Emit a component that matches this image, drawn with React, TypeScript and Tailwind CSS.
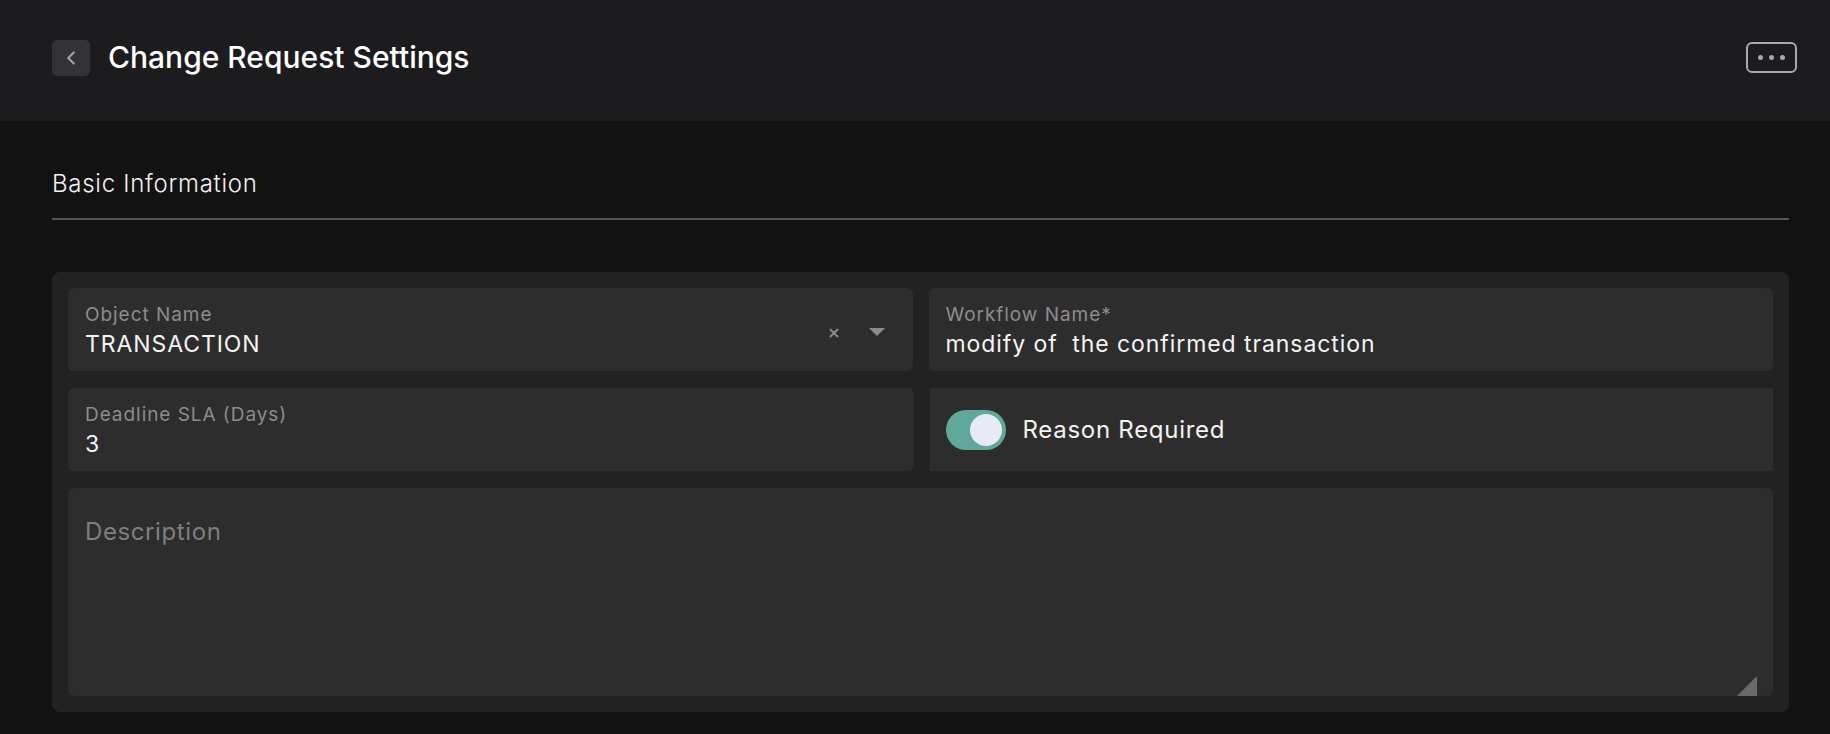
import { ChevronLeft, X } from "lucide-react";

const font = { fontFamily: "Inter, 'Noto Sans', sans-serif" };

function Field({ label, value }: { label: string; value: string }) {
    return <div className="flex-1 h-[83px] rounded-md bg-[#2d2d2d] px-[17px] pt-[15px]">
        <div className="text-[19px] leading-[24px] tracking-[0.05em] text-[#8c8c8c]">{label}</div>
        <div className="mt-[2px] text-[23px] leading-[30px] tracking-[0.04em] text-[#f4f4f4] whitespace-pre">{value}</div>
    </div>;
}

export default function App() {
    return <div style={font} className="h-screen w-full bg-[#121212] text-white overflow-hidden">
        {/* header */}
        <div className="h-[121px] bg-[#1c1c1e] flex items-center justify-between pl-[52px] pr-[33px] pb-[6px]">
            <div className="flex items-center gap-[18px]">
                <button className="w-[38px] h-[36px] rounded-[5px] bg-[#333336] flex items-center justify-center">
                    <ChevronLeft size={22} strokeWidth={2.5} className="text-[#a0a0a6]" />
                </button>
                <div className="text-[30px] font-medium">Change Request Settings</div>
            </div>
            <button className="w-[51px] h-[31px] rounded-[6px] border-2 border-[#a8a8ad] flex items-center justify-center gap-[6px]">
                <span className="w-[5px] h-[5px] rounded-full bg-[#a8a8ad]"></span>
                <span className="w-[5px] h-[5px] rounded-full bg-[#a8a8ad]"></span>
                <span className="w-[5px] h-[5px] rounded-full bg-[#a8a8ad]"></span>
            </button>
        </div>

        <div className="pl-[52px] pr-[41px]">
            <div className="pt-[48px] pb-[19px] border-b-2 border-[#565656] text-[24px] leading-[30px] font-light tracking-[0.03em] text-[#f2f2f2]">
                Basic Information
            </div>

            <div className="mt-[52px] rounded-lg bg-[#222222] p-[16px] flex flex-col gap-[17px]">
                <div className="flex gap-[16px]">
                    <div className="flex-1 h-[83px] rounded-md bg-[#2d2d2d] px-[17px] pt-[15px] flex items-center">
                        <div className="flex-1 self-start">
                            <div className="text-[19px] leading-[24px] tracking-[0.05em] text-[#8c8c8c]">Object Name</div>
                            <div className="mt-[2px] text-[23px] leading-[30px] tracking-[0.04em] text-[#f4f4f4]">TRANSACTION</div>
                        </div>
                        <div className="flex items-center gap-[28px] pr-[11px] -mt-[9px]">
                            <X size={14} strokeWidth={3.2} className="text-[#8b8b90]" />
                            <svg width="16" height="9" viewBox="0 0 16 9"><path d="M0 0 L16 0 L8 8 Z" fill="#8b8b90" /></svg>
                        </div>
                    </div>
                    <Field label="Workflow Name*" value="modify of  the confirmed transaction" />
                </div>
                <div className="flex gap-[16px]">
                    <Field label="Deadline SLA (Days)" value="3" />
                    <div className="flex-1 h-[83px] bg-[#2d2d2d] px-[16px] flex items-center gap-[17px]">
                        <div className="w-[60px] h-[40px] rounded-full bg-[#5ea99a] flex items-center justify-end pr-[4px]">
                            <div className="w-[32px] h-[32px] rounded-full bg-[#e8eaf6]"></div>
                        </div>
                        <div className="text-[24px] tracking-[0.03em] text-[#f4f4f4]">Reason Required</div>
                    </div>
                </div>
                <div className="relative h-[208px] rounded-md bg-[#2d2d2d] px-[17px] pt-[30px]">
                    <div className="text-[24px] leading-[28px] tracking-[0.025em] text-[#7e7e82]">Description</div>
                    <svg className="absolute right-[16px] bottom-0" width="20" height="20" viewBox="0 0 20 20">
                        <path d="M20 0 L20 20 L0 20 Z" fill="#6a6a6a" />
                    </svg>
                </div>
            </div>
        </div>
    </div>;
}
